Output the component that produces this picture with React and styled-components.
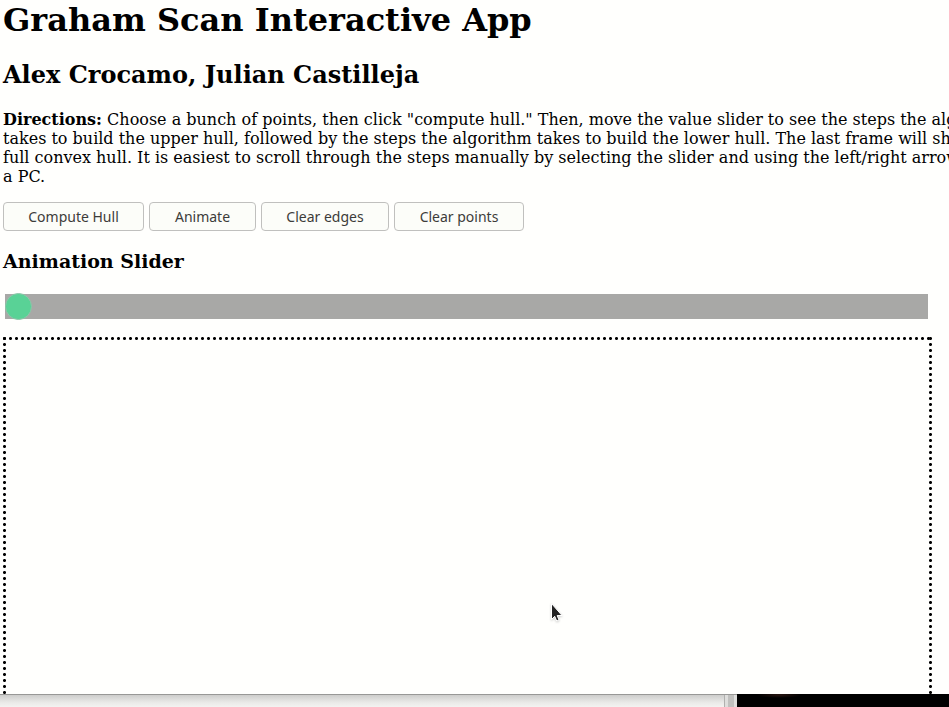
import React, { useState } from "react";
import styled, { createGlobalStyle } from "styled-components";

const GlobalStyle = createGlobalStyle`
  body {
    margin: 0;
    overflow: hidden;
    background: #fffffd;
    color: #000;
    font: 16px/19px "DejaVu Serif", serif;
  }
`;

const Desktop = styled.div`
  display: flex;
  flex-direction: column;
  height: 100vh;
`;

const Page = styled.main`
  flex: 1;
  min-height: 0;
  overflow: hidden;
  padding: 1px 17px 0 3px;
`;

const Title = styled.h1`
  margin: 0 0 22px;
  font-size: 32px;
  line-height: 38px;
`;

const Authors = styled.h2`
  margin: 0 0 21px;
  font-size: 24px;
  line-height: 28px;
`;

const Directions = styled.p`
  margin: 0 0 16px;
  white-space: nowrap;
`;

const Toolbar = styled.div`
  display: flex;
  gap: 5px;
`;

const Button = styled.button`
  box-sizing: border-box;
  min-width: ${({ $minWidth }) => $minWidth}px;
  height: 29px;
  padding: 0 23px;
  border: 1px solid #c0c0be;
  border-radius: 4px;
  background: #fcfdf9;
  color: #3c3c3a;
  font: 14px/20px "Noto Sans", sans-serif;
`;

const SliderLabel = styled.label`
  display: block;
  margin: 19px 0 22px;
  font-size: 19px;
  line-height: 22px;
  font-weight: bold;
`;

const SliderRow = styled.div`
  display: flex;
  padding: 0 4px 0 2px;
  margin-bottom: 18px;
`;

const Slider = styled.input`
  appearance: none;
  flex: 1;
  height: 25px;
  margin: 0;
  background: #a8a8a6;

  &::-webkit-slider-thumb {
    appearance: none;
    box-sizing: border-box;
    width: 27px;
    height: 27px;
    border: 1px solid #8fc5aa;
    border-radius: 50%;
    background: #59d296;
  }
`;

const dot = "#000 76%, #0009 78% 98%, transparent 100%";

/* Round 3px dots, one every 6px, along all four edges. */
const Board = styled.canvas`
  display: block;
  box-sizing: border-box;
  width: 100%;
  height: 603px;
  padding: 0 3px 3px 0;
  background-image:
    radial-gradient(circle closest-side at 25% 50%, ${dot}),
    radial-gradient(circle closest-side at 25% 50%, ${dot}),
    radial-gradient(circle closest-side at 50% 25%, ${dot}),
    radial-gradient(circle closest-side at 50% 25%, ${dot});
  background-size: 6px 3px, 6px 3px, 3px 6px, 3px 6px;
  background-position: left top, left bottom, left top, right top;
  background-repeat: round no-repeat, round no-repeat, repeat-y, repeat-y;
  background-origin: content-box, content-box, border-box, border-box;
`;

const Behind = styled.div`
  display: flex;
  height: 13px;
`;

const WindowShade = styled.div`
  flex: 0 0 724px;
  box-sizing: border-box;
  border-top: 1px solid #989896;
  background: linear-gradient(#cdcdcb, #e9e9e7 60%, #f3f3f1);
`;

const WindowEdge = styled.div`
  flex: 0 0 13px;
  box-sizing: border-box;
  border-top: 1px solid #989896;
  background: linear-gradient(
    to right,
    #b0b0ae 1px,
    #dededc 1px 4px,
    #c0c0be 4px 10px,
    #e0e0de 10px
  );
`;

const Wallpaper = styled.div`
  flex: 1;
  background: radial-gradient(ellipse 22px 3px at 42px 1px, #281510, #000);
`;

const Pointer = styled.svg`
  position: absolute;
  left: 548px;
  top: 601px;
  pointer-events: none;
  filter: drop-shadow(0 1px 1px #0003);
`;

export default function App() {
  const [step, setStep] = useState(0);

  return (
    <Desktop>
      <GlobalStyle />
      <Page>
        <Title>Graham Scan Interactive App</Title>
        <Authors>Alex Crocamo, Julian Castilleja</Authors>
        <Directions>
          <strong>Directions:</strong> Choose a bunch of points, then click
          "compute hull." Then, move the value slider to see the steps the algorithm
          <br />
          takes to build the upper hull, followed by the steps the algorithm takes
          to build the lower hull. The last frame will show the
          <br />
          full convex hull. It is easiest to scroll through the steps manually by
          selecting the slider and using the left/right arrows on
          <br />a PC.
        </Directions>
        <Toolbar>
          <Button type="button" $minWidth={141}>Compute Hull</Button>
          <Button type="button" $minWidth={107}>Animate</Button>
          <Button type="button" $minWidth={128} onClick={() => setStep(0)}>
            Clear edges
          </Button>
          <Button type="button" $minWidth={130} onClick={() => setStep(0)}>
            Clear points
          </Button>
        </Toolbar>
        <SliderLabel htmlFor="step">Animation Slider</SliderLabel>
        <SliderRow>
          <Slider
            id="step"
            type="range"
            min="0"
            max="100"
            value={step}
            onChange={(e) => setStep(Number(e.target.value))}
          />
        </SliderRow>
        <Board aria-label="Point canvas" />
      </Page>
      <Behind>
        <WindowShade />
        <WindowEdge />
        <Wallpaper />
      </Behind>
      <Pointer width="18" height="24" viewBox="0 0 18 24" aria-hidden="true">
        <path
          d="M3.5 2.5V18.5L6.7 15.3L8.7 20L11 19L9.2 14.5H14Z"
          fill="#222"
          stroke="#fff"
          strokeWidth="1"
        />
      </Pointer>
    </Desktop>
  );
}
